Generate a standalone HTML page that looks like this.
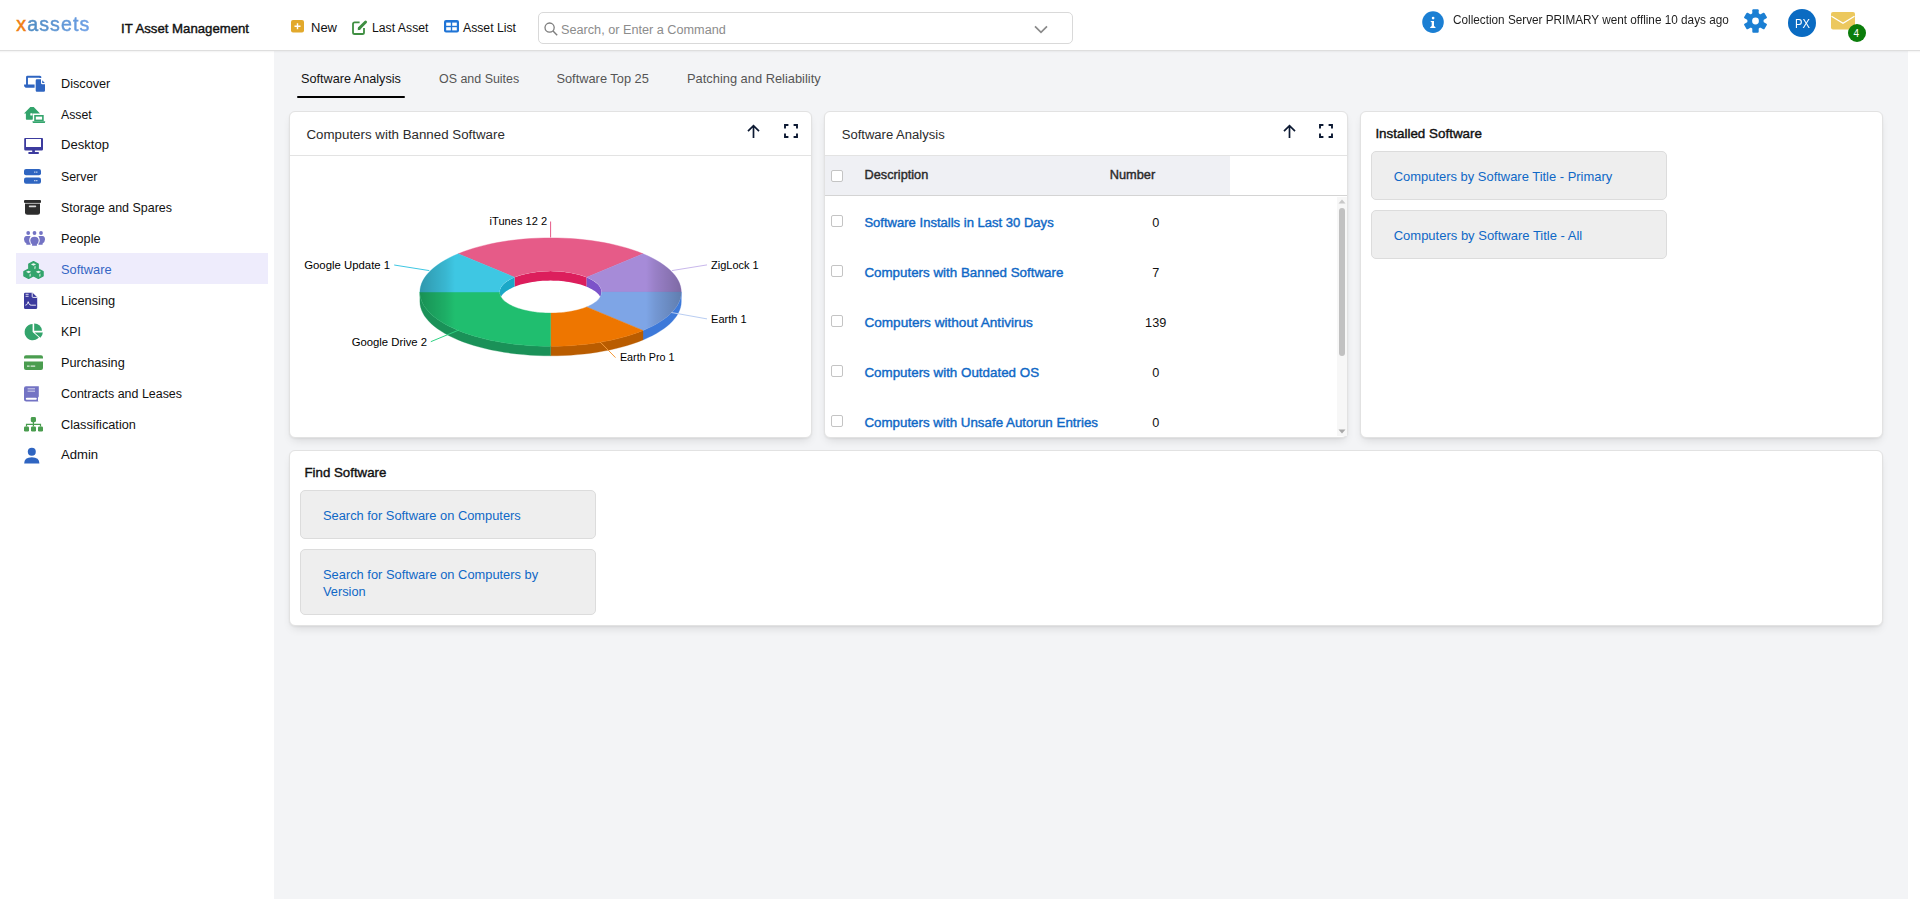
<!DOCTYPE html><html><head><meta charset="utf-8"><style>
*{margin:0;padding:0;box-sizing:border-box}
html,body{width:1920px;height:911px;overflow:hidden;background:#fff;font-family:"Liberation Sans",sans-serif}
.t{position:absolute;white-space:nowrap;line-height:0}
svg{position:absolute;overflow:visible}
</style></head><body><div style="position:absolute;left:274px;top:51px;width:1634px;height:848px;background:#f3f4f6"></div>
<div style="position:absolute;left:0px;top:0px;width:1920px;height:50px;background:#fff"></div>
<div style="position:absolute;left:0px;top:50px;width:1920px;height:1px;background:#dedede"></div>
<div style="position:absolute;left:0px;top:51px;width:1920px;height:2px;background:linear-gradient(rgba(0,0,0,0.05),rgba(0,0,0,0))"></div>
<div class="t" style="left:16.3px;top:24.2px;font-size:19.6px;letter-spacing:1.1px;-webkit-text-stroke-width:0.5px"><span style="color:#f07f14">x</span><span style="background:linear-gradient(90deg,#4f8cc2,#6d9fe6);-webkit-background-clip:text;background-clip:text;color:transparent">assets</span></div>
<div class="t" style="left:121.00px;top:28.83px;font-size:13.2px;font-weight:normal;color:#111;-webkit-text-stroke-width:0.4px;">IT Asset Management</div>
<svg style="left:291px;top:20px" width="14" height="13" viewBox="0 0 14 13"><rect x="0" y="0" width="13" height="12.6" rx="2" fill="#e2a92c"/><path d="M6.5 3.3v6M3.5 6.3h6" stroke="#fff" stroke-width="1.4"/></svg>
<div class="t" style="left:311.00px;top:27.50px;font-size:13.0px;font-weight:normal;color:#111;">New</div>
<svg style="left:352px;top:19px" width="16" height="16" viewBox="0 0 16 16"><path d="M7.6 3.4H2.6Q1 3.4 1 5v8.4Q1 15 2.6 15h7.8q1.6 0 1.6-1.6V9" fill="none" stroke="#3e8e41" stroke-width="1.8"/><path d="M7.2 9.4L13.6 3" stroke="#3e8e41" stroke-width="2.9" stroke-linecap="round"/><path d="M5.6 11.2l.9-2.9 2.1 2.1z" fill="#3e8e41"/></svg>
<div class="t" style="left:372.00px;top:27.76px;font-size:12.24px;font-weight:normal;color:#111;">Last Asset</div>
<svg style="left:444px;top:20px" width="15" height="13" viewBox="0 0 15 13"><rect x="0" y="0" width="15" height="12.6" rx="2" fill="#1f74d6"/><rect x="2.2" y="2.6" width="4.6" height="3.2" fill="#fff"/><rect x="8.2" y="2.6" width="4.6" height="3.2" fill="#fff"/><rect x="2.2" y="7.2" width="4.6" height="3.2" fill="#fff"/><rect x="8.2" y="7.2" width="4.6" height="3.2" fill="#fff"/></svg>
<div class="t" style="left:463.00px;top:27.77px;font-size:12.22px;font-weight:normal;color:#111;">Asset List</div>
<div style="position:absolute;left:538px;top:12px;width:535px;height:32px;border:1px solid #d9d9d9;border-radius:5px;background:#fff"></div>
<svg style="left:543px;top:21px" width="16" height="16" viewBox="0 0 16 16"><circle cx="6.6" cy="6.6" r="4.6" fill="none" stroke="#7d7d7d" stroke-width="1.3"/><path d="M10 10l4.2 4.2" stroke="#7d7d7d" stroke-width="1.4"/></svg>
<div class="t" style="left:561.00px;top:29.61px;font-size:12.68px;font-weight:normal;color:#8c8c8c;">Search, or Enter a Command</div>
<svg style="left:1034px;top:25px" width="14" height="10" viewBox="0 0 14 10"><path d="M1 1.4l6 6 6-6" fill="none" stroke="#8a8a8a" stroke-width="1.7"/></svg>
<svg style="left:1421.5px;top:11px" width="22" height="22" viewBox="0 0 22 22"><circle cx="11" cy="11.1" r="10.8" fill="#1b7fd3"/><circle cx="11.1" cy="7.1" r="1.35" fill="#fff"/><path d="M8.7 9.9h3.3v5l1.5 1.3v.7H8.2v-.7l1.5-1.3v-3.6l-1-.6z" fill="#fff"/></svg>
<div class="t" style="left:1453.00px;top:19.53px;font-size:12.9px;font-weight:normal;color:#1f1f1f;transform:scaleX(0.912);transform-origin:0 0;">Collection Server PRIMARY went offline 10 days ago</div>
<svg style="left:1744px;top:9px" width="24" height="24" viewBox="0 0 24 24"><rect x="8.30" y="0.20" width="6.4" height="6" rx="1" transform="rotate(0 11.5 12)" fill="#1b7fd3"/><rect x="8.30" y="0.20" width="6.4" height="6" rx="1" transform="rotate(60 11.5 12)" fill="#1b7fd3"/><rect x="8.30" y="0.20" width="6.4" height="6" rx="1" transform="rotate(120 11.5 12)" fill="#1b7fd3"/><rect x="8.30" y="0.20" width="6.4" height="6" rx="1" transform="rotate(180 11.5 12)" fill="#1b7fd3"/><rect x="8.30" y="0.20" width="6.4" height="6" rx="1" transform="rotate(240 11.5 12)" fill="#1b7fd3"/><rect x="8.30" y="0.20" width="6.4" height="6" rx="1" transform="rotate(300 11.5 12)" fill="#1b7fd3"/><circle cx="11.5" cy="12" r="8.2" fill="#1b7fd3"/><circle cx="11.5" cy="12" r="3.4" fill="#fff"/></svg>
<div style="position:absolute;left:1788px;top:9px;width:28px;height:28px;border-radius:50%;background:#0a6bc2"></div>
<div class="t" style="left:1794.80px;top:23.63px;font-size:12.6px;font-weight:normal;color:#fff;transform:scaleX(0.89);transform-origin:0 0;">PX</div>
<svg style="left:1831px;top:12px" width="25" height="18" viewBox="0 0 25 18"><rect x="0" y="0" width="24" height="17.6" rx="2" fill="#ecc85e"/><path d="M0.5 4.2l11.5 7 11.5-7" fill="none" stroke="#fff" stroke-width="1.3"/></svg>
<div style="position:absolute;left:1848px;top:24px;width:18px;height:18px;border-radius:50%;background:#0b7d0b"></div>
<div class="t" style="left:1853.60px;top:33.53px;font-size:10px;font-weight:normal;color:#fff;">4</div>
<div style="position:absolute;left:16px;top:253px;width:252px;height:31px;background:#eeecfc"></div>
<div class="t" style="left:61.00px;top:83.60px;font-size:12.7px;font-weight:normal;color:#111;">Discover</div>
<div class="t" style="left:61.00px;top:114.74px;font-size:12.3px;font-weight:normal;color:#111;">Asset</div>
<div class="t" style="left:61.00px;top:145.46px;font-size:13.1px;font-weight:normal;color:#111;">Desktop</div>
<div class="t" style="left:61.00px;top:176.72px;font-size:12.35px;font-weight:normal;color:#111;">Server</div>
<div class="t" style="left:61.00px;top:207.67px;font-size:12.49px;font-weight:normal;color:#111;">Storage and Spares</div>
<div class="t" style="left:61.00px;top:238.60px;font-size:12.71px;font-weight:normal;color:#111;">People</div>
<div class="t" style="left:61.00px;top:269.55px;font-size:12.84px;font-weight:normal;color:#3566c4;">Software</div>
<div class="t" style="left:61.00px;top:300.56px;font-size:12.82px;font-weight:normal;color:#111;">Licensing</div>
<div class="t" style="left:61.00px;top:331.74px;font-size:12.3px;font-weight:normal;color:#111;">KPI</div>
<div class="t" style="left:61.00px;top:362.59px;font-size:12.74px;font-weight:normal;color:#111;">Purchasing</div>
<div class="t" style="left:61.00px;top:393.69px;font-size:12.44px;font-weight:normal;color:#111;">Contracts and Leases</div>
<div class="t" style="left:61.00px;top:424.60px;font-size:12.71px;font-weight:normal;color:#111;">Classification</div>
<div class="t" style="left:61.00px;top:455.46px;font-size:13.1px;font-weight:normal;color:#111;">Admin</div>
<svg style="left:23px;top:75px" width="24" height="18" viewBox="0 0 24 18"><path d="M4 10V2.2q0-.4.4-.4H17.2" fill="none" stroke="#2f65c1" stroke-width="1.9"/><path d="M16.4 1h1q.9 0 .9.9v1h-1.9z" fill="#2f65c1"/><path d="M1.1 9.6H11.6v2.6q0 .6-.6.6H2.6L1.1 11.2z" fill="#2f65c1"/><path d="M13.9 4.2H18V7.9q0 1.3 1.3 1.3H22V15.6q0 1.2-1.2 1.2H13.9q-1.2 0-1.2-1.2V5.4q0-1.2 1.2-1.2z" fill="#2f65c1"/><path d="M19.2 5.2L21.8 8.1H19.2z" fill="#2f65c1"/></svg>
<svg style="left:23px;top:106px" width="24" height="18" viewBox="0 0 24 18"><path d="M1 7.5L7.3 1H10.7L17 7.5H9.9V13q0 .7-.7.7H3.6q-.7 0-.7-.7V7.5z" fill="#33a46c"/><rect x="7.3" y="7.2" width="2.3" height="2.4" rx=".6" fill="#fff"/><rect x="9.9" y="8" width="12" height="9.6" fill="#fff"/><rect x="12" y="9.8" width="7.9" height="4.6" fill="none" stroke="#33a46c" stroke-width="1.6"/><path d="M9.4 15.2H22.3L21.8 16.9H9.9z" fill="#33a46c"/></svg>
<svg style="left:24px;top:137px" width="20" height="18" viewBox="0 0 20 18"><path d="M1.1 1h17q.9 0 .9.9v10.4q0 1.3-1.3 1.3H1.5Q.2 13.6.2 12.3V1.9Q.2 1 1.1 1z" fill="#3c3b9e"/><rect x="2" y="2" width="15" height="8" fill="#fff"/><rect x="8.2" y="13" width="2.7" height="2.4" fill="#3c3b9e"/><rect x="4.2" y="15" width="10.8" height="1.9" rx=".9" fill="#3c3b9e"/></svg>
<svg style="left:24px;top:168px" width="18" height="18" viewBox="0 0 18 18"><rect x="0" y="1" width="17" height="6.2" rx="2" fill="#2f65c1"/><rect x="0" y="9.6" width="17" height="6.2" rx="2" fill="#2f65c1"/><rect x="10.2" y="3.6" width="1.2" height="1" fill="#fff"/><rect x="12.2" y="3.6" width="1.2" height="1" fill="#fff"/><rect x="10.2" y="12.2" width="1.2" height="1" fill="#fff"/><rect x="12.2" y="12.2" width="1.2" height="1" fill="#fff"/></svg>
<svg style="left:24px;top:199px" width="18" height="18" viewBox="0 0 18 18"><rect x="0" y="0.9" width="17" height="3" rx="1" fill="#2d2d2d"/><rect x="1" y="3.9" width="15" height="0.8" fill="#bdbdbd"/><path d="M1 4.7h15v8.6q0 2.5-2.5 2.5h-10Q1 15.8 1 13.3z" fill="#2d2d2d"/><rect x="4.8" y="6.6" width="7.4" height="1.6" rx=".7" fill="#d6d6d6"/></svg>
<svg style="left:23px;top:230px" width="23" height="18" viewBox="0 0 23 18"><g fill="#7373c4"><circle cx="5.2" cy="3" r="1.9"/><circle cx="11.5" cy="3" r="1.9"/><circle cx="18" cy="3" r="1.9"/><path d="M3.5 6H7.6Q6.2 8.4 6.2 10.2Q6.2 12.2 7.6 14V14.8H3.4V13.6Q1 12 1 9.6Q1 6 3.5 6z"/><path d="M19.5 6H15.4Q16.8 8.4 16.8 10.2Q16.8 12.2 15.4 14V14.8H19.6V13.6Q22 12 22 9.6Q22 6 19.5 6z"/><path d="M11.5 6.8Q15.7 6.8 15.7 10.6Q15.7 13 13.9 14.2V15.8H9.1V14.2Q7.3 13 7.3 10.6Q7.3 6.8 11.5 6.8z"/></g></svg>
<svg style="left:23px;top:261px" width="22" height="19" viewBox="0 0 22 19"><g fill="#33a46c" stroke="#33a46c" stroke-width="1.3" stroke-linejoin="round"><path d="M10.50,0.60 L15.20,2.99 L15.20,7.41 L10.50,9.80 L5.80,7.41 L5.80,2.99Z"/><path d="M5.60,8.20 L10.30,10.59 L10.30,15.01 L5.60,17.40 L0.90,15.01 L0.90,10.59Z"/><path d="M15.40,8.20 L20.10,10.59 L20.10,15.01 L15.40,17.40 L10.70,15.01 L10.70,10.59Z"/></g><g fill="#fff" opacity=".9"><path d="M10.50,2.20 L13.10,3.19 L10.50,4.69 L7.90,3.19Z"/><path d="M11.50,5.59 L12.50,4.99 L12.50,7.61 L11.50,8.21Z"/><path d="M5.60,9.80 L8.20,10.79 L5.60,12.29 L3.00,10.79Z"/><path d="M6.60,13.19 L7.60,12.59 L7.60,15.21 L6.60,15.81Z"/><path d="M15.40,9.80 L18.00,10.79 L15.40,12.29 L12.80,10.79Z"/><path d="M16.40,13.19 L17.40,12.59 L17.40,15.21 L16.40,15.81Z"/></g></svg>
<svg style="left:23px;top:292px" width="16" height="18" viewBox="0 0 16 18"><path d="M2.2 0.7h7.4l4.6 4.6v10.4q0 1.4-1.4 1.4H2.4Q1 17.1 1 15.7V1.9Q1 .7 2.2 .7z" fill="#3c3b9e"/><path d="M9.2 0.7v3.8q0 .9.9 .9h4.1" fill="none" stroke="#fff" stroke-width="0.9"/><rect x="2.6" y="1.8" width="3" height="1" fill="#fff" opacity=".8"/><rect x="2.6" y="3.8" width="3" height="1" fill="#fff" opacity=".8"/><path d="M2.4 13.2q1.4 0 2.1-1.8l.7-1.7.9 2.2q.6 1.3 2.2 1.3h4.6" fill="none" stroke="#fff" stroke-width=".9"/></svg>
<svg style="left:24px;top:323px" width="20" height="18" viewBox="0 0 20 18"><path d="M8.6 0.9A8.2 8.2 0 1 0 14.9 14.6L8.6 8.9z" fill="#33a46c"/><path d="M10.2 0.5A7.6 7.6 0 0 1 18 7.8H10.2z" fill="#33a46c"/><path d="M10.6 9.4H18.8a8 8 0 0 1-2.4 5.4z" fill="#33a46c"/></svg>
<svg style="left:24px;top:354px" width="20" height="18" viewBox="0 0 20 18"><path d="M2 1.2h15q2 0 2 2v1.2H0V3.2q0-2 2-2z" fill="#4a9d4f"/><path d="M0 7.4h19v6.6q0 2-2 2H2q-2 0-2-2z" fill="#4a9d4f"/><rect x="3" y="11.6" width="2.6" height="1" fill="#fff"/><rect x="6.6" y="11.6" width="4.6" height="1" fill="#fff"/></svg>
<svg style="left:24px;top:385px" width="16" height="18" viewBox="0 0 16 18"><path d="M2 1.2h12.8v10.4q-.8.6-.8 1.6v2.6q0 .4.8.8H2.2Q0 16.6 0 14.6V3.2Q0 1.2 2 1.2z" fill="#7373c4"/><rect x="3.6" y="3.2" width="7.4" height="1.2" fill="#fff" opacity=".6"/><rect x="3.6" y="5.6" width="7.4" height="1.2" fill="#fff" opacity=".6"/><rect x="1.8" y="12.8" width="11" height="2" rx="1" fill="#fff"/></svg>
<svg style="left:24px;top:416px" width="20" height="18" viewBox="0 0 20 18"><rect x="6.8" y="1" width="5.2" height="5.2" rx="1.4" fill="#4a9d4f"/><rect x="0" y="10.4" width="5" height="5" rx="1.2" fill="#4a9d4f"/><rect x="7" y="10.4" width="5" height="5" rx="1.2" fill="#4a9d4f"/><rect x="14" y="10.4" width="5" height="5" rx="1.2" fill="#4a9d4f"/><path d="M9.4 6v4.6M2.5 10.6V8.4h14v2.2" fill="none" stroke="#4a9d4f" stroke-width="1.2"/></svg>
<svg style="left:24px;top:447px" width="16" height="18" viewBox="0 0 16 18"><circle cx="7.8" cy="4.8" r="4" fill="#2f65c1"/><path d="M0.2 16.6q0-6.4 7.6-6.4t7.6 6.4z" fill="#2f65c1"/></svg>
<div class="t" style="left:301.00px;top:78.61px;font-size:12.66px;font-weight:normal;color:#111;">Software Analysis</div>
<div class="t" style="left:439.00px;top:78.69px;font-size:12.45px;font-weight:normal;color:#555;">OS and Suites</div>
<div class="t" style="left:556.40px;top:78.55px;font-size:12.84px;font-weight:normal;color:#555;">Software Top 25</div>
<div class="t" style="left:687.00px;top:78.54px;font-size:12.86px;font-weight:normal;color:#555;">Patching and Reliability</div>
<div style="position:absolute;left:297px;top:96px;width:108px;height:2px;background:#000;border-radius:1px"></div>
<div style="position:absolute;left:289px;top:111px;width:523px;height:327px;background:#fff;border:1px solid #e2e2e2;border-radius:6px;box-shadow:0 5px 10px -3px rgba(0,0,0,0.12),0 1px 2px rgba(0,0,0,0.05)"></div>
<div style="position:absolute;left:824px;top:111px;width:524px;height:327px;background:#fff;border:1px solid #e2e2e2;border-radius:6px;box-shadow:0 5px 10px -3px rgba(0,0,0,0.12),0 1px 2px rgba(0,0,0,0.05)"></div>
<div style="position:absolute;left:1360px;top:111px;width:523px;height:327px;background:#fff;border:1px solid #e2e2e2;border-radius:6px;box-shadow:0 5px 10px -3px rgba(0,0,0,0.12),0 1px 2px rgba(0,0,0,0.05)"></div>
<div style="position:absolute;left:289px;top:450px;width:1594px;height:176px;background:#fff;border:1px solid #e2e2e2;border-radius:6px;box-shadow:0 5px 10px -3px rgba(0,0,0,0.12),0 1px 2px rgba(0,0,0,0.05)"></div>
<div class="t" style="left:306.50px;top:134.98px;font-size:13.32px;font-weight:normal;color:#2b2b2b;">Computers with Banned Software</div>
<div style="position:absolute;left:290px;top:155px;width:521px;height:1px;background:#e3e3e3"></div>
<svg style="left:747px;top:124px" width="14" height="15" viewBox="0 0 14 15"><path d="M6.5 14V1.8M1 7.2l5.5-5.6L12 7.2" fill="none" stroke="#0d1a33" stroke-width="1.7"/></svg>
<svg style="left:783.5px;top:124px" width="15" height="15" viewBox="0 0 15 15"><path d="M1 4.4V1h3.4M9.6 1h3.4v3.4M13 9.6V13H9.6M4.4 13H1V9.6" fill="none" stroke="#0d1a33" stroke-width="1.9"/></svg>
<svg style="left:1283px;top:124px" width="14" height="15" viewBox="0 0 14 15"><path d="M6.5 14V1.8M1 7.2l5.5-5.6L12 7.2" fill="none" stroke="#0d1a33" stroke-width="1.7"/></svg>
<svg style="left:1318.5px;top:124px" width="15" height="15" viewBox="0 0 15 15"><path d="M1 4.4V1h3.4M9.6 1h3.4v3.4M13 9.6V13H9.6M4.4 13H1V9.6" fill="none" stroke="#0d1a33" stroke-width="1.9"/></svg>
<div class="t" style="left:841.70px;top:135.07px;font-size:13.06px;font-weight:normal;color:#2b2b2b;">Software Analysis</div>
<div style="position:absolute;left:825px;top:155px;width:522px;height:1px;background:#e3e3e3"></div>
<div style="position:absolute;left:825px;top:156px;width:405px;height:39px;background:#eff0f4"></div>
<div style="position:absolute;left:825px;top:195px;width:522px;height:1px;background:#d4d4d4"></div>
<div style="position:absolute;left:831px;top:170px;width:12px;height:12px;border:1px solid #c4c4c4;border-radius:2px;background:#fff"></div>
<div class="t" style="left:864.60px;top:174.59px;font-size:12.72px;font-weight:normal;color:#2a2a2a;-webkit-text-stroke-width:0.4px;">Description</div>
<div class="t" style="left:1109.70px;top:174.57px;font-size:12.79px;font-weight:normal;color:#2a2a2a;-webkit-text-stroke-width:0.4px;">Number</div>
<div style="position:absolute;left:831px;top:215px;width:12px;height:12px;border:1px solid #c4c4c4;border-radius:2px;background:#fff"></div>
<div class="t" style="left:864.40px;top:223.38px;font-size:13.05px;font-weight:normal;color:#0f68c6;-webkit-text-stroke-width:0.4px;">Software Installs in Last 30 Days</div>
<div class="t" style="left:1125.7px;width:60px;text-align:center;top:222.70px;font-size:12.7px;color:#111">0</div>
<div style="position:absolute;left:831px;top:265px;width:12px;height:12px;border:1px solid #c4c4c4;border-radius:2px;background:#fff"></div>
<div class="t" style="left:864.40px;top:273.27px;font-size:13.37px;font-weight:normal;color:#0f68c6;-webkit-text-stroke-width:0.4px;">Computers with Banned Software</div>
<div class="t" style="left:1125.7px;width:60px;text-align:center;top:272.70px;font-size:12.7px;color:#111">7</div>
<div style="position:absolute;left:831px;top:315px;width:12px;height:12px;border:1px solid #c4c4c4;border-radius:2px;background:#fff"></div>
<div class="t" style="left:864.40px;top:323.19px;font-size:13.6px;font-weight:normal;color:#0f68c6;-webkit-text-stroke-width:0.4px;">Computers without Antivirus</div>
<div class="t" style="left:1125.7px;width:60px;text-align:center;top:322.70px;font-size:12.7px;color:#111">139</div>
<div style="position:absolute;left:831px;top:365px;width:12px;height:12px;border:1px solid #c4c4c4;border-radius:2px;background:#fff"></div>
<div class="t" style="left:864.40px;top:373.26px;font-size:13.38px;font-weight:normal;color:#0f68c6;-webkit-text-stroke-width:0.4px;">Computers with Outdated OS</div>
<div class="t" style="left:1125.7px;width:60px;text-align:center;top:372.70px;font-size:12.7px;color:#111">0</div>
<div style="position:absolute;left:831px;top:415px;width:12px;height:12px;border:1px solid #c4c4c4;border-radius:2px;background:#fff"></div>
<div class="t" style="left:864.40px;top:423.27px;font-size:13.35px;font-weight:normal;color:#0f68c6;-webkit-text-stroke-width:0.4px;">Computers with Unsafe Autorun Entries</div>
<div class="t" style="left:1125.7px;width:60px;text-align:center;top:422.70px;font-size:12.7px;color:#111">0</div>
<div style="position:absolute;left:1337px;top:197px;width:10px;height:239px;background:#f7f7f7"></div>
<div style="position:absolute;left:1339px;top:208px;width:6px;height:148px;background:#c1c1c1;border-radius:3px"></div>
<svg style="left:1338px;top:199px" width="8" height="5" viewBox="0 0 8 5"><path d="M4 0.5L7.5 4.5h-7z" fill="#c8c8c8"/></svg>
<svg style="left:1338px;top:429px" width="8" height="5" viewBox="0 0 8 5"><path d="M4 4.5L7.5 0.5h-7z" fill="#a8a8a8"/></svg>
<div class="t" style="left:1375.40px;top:134.35px;font-size:13.42px;font-weight:normal;color:#111;-webkit-text-stroke-width:0.4px;">Installed Software</div>
<div style="position:absolute;left:1371px;top:151px;width:296px;height:49px;background:#eeeeee;border:1px solid #dcdcdc;border-radius:5px"></div>
<div style="position:absolute;left:1371px;top:210px;width:296px;height:49px;background:#eeeeee;border:1px solid #dcdcdc;border-radius:5px"></div>
<div class="t" style="left:1393.70px;top:176.52px;font-size:12.94px;font-weight:normal;color:#0f68c6;">Computers by Software Title - Primary</div>
<div class="t" style="left:1393.70px;top:236.00px;font-size:13.0px;font-weight:normal;color:#0f68c6;">Computers by Software Title - All</div>
<div class="t" style="left:304.50px;top:473.40px;font-size:13.28px;font-weight:normal;color:#111;-webkit-text-stroke-width:0.4px;">Find Software</div>
<div style="position:absolute;left:300px;top:490px;width:296px;height:49px;background:#eeeeee;border:1px solid #dcdcdc;border-radius:5px"></div>
<div style="position:absolute;left:300px;top:549px;width:296px;height:66px;background:#eeeeee;border:1px solid #dcdcdc;border-radius:5px"></div>
<div class="t" style="left:323.00px;top:516.05px;font-size:12.85px;font-weight:normal;color:#0f68c6;">Search for Software on Computers</div>
<div class="t" style="left:323.00px;top:575.34px;font-size:12.86px;font-weight:normal;color:#0f68c6;">Search for Software on Computers by</div>
<div class="t" style="left:323.00px;top:591.96px;font-size:12.81px;font-weight:normal;color:#0f68c6;">Version</div>
<svg style="left:0;top:0" width="1920" height="911"><defs><clipPath id="hole"><ellipse cx="550.6" cy="292.1" rx="51.0" ry="21.0"/></clipPath><linearGradient id="edge" gradientUnits="userSpaceOnUse" x1="419.90000000000003" y1="0" x2="681.3" y2="0"><stop offset="0" stop-color="#000" stop-opacity="0.24"/><stop offset="0.10" stop-color="#000" stop-opacity="0.08"/><stop offset="0.135" stop-color="#000" stop-opacity="0"/><stop offset="0.865" stop-color="#000" stop-opacity="0"/><stop offset="0.90" stop-color="#000" stop-opacity="0.08"/><stop offset="1" stop-color="#000" stop-opacity="0.24"/></linearGradient></defs><g clip-path="url(#hole)"><path d="M514.54,277.25 L516.47,276.49 L518.50,275.78 L520.62,275.11 L522.82,274.49 L525.10,273.91 L527.45,273.39 L529.86,272.92 L532.32,272.49 L534.84,272.13 L537.40,271.82 L540.00,271.56 L542.62,271.36 L545.27,271.22 L547.93,271.13 L550.60,271.10 L553.27,271.13 L555.93,271.22 L558.58,271.36 L561.20,271.56 L563.80,271.82 L566.36,272.13 L568.88,272.49 L571.34,272.92 L573.75,273.39 L576.10,273.91 L578.38,274.49 L580.58,275.11 L582.70,275.78 L584.73,276.49 L586.66,277.25 L586.66,286.75 L584.73,285.99 L582.70,285.28 L580.58,284.61 L578.38,283.99 L576.10,283.41 L573.75,282.89 L571.34,282.42 L568.88,281.99 L566.36,281.63 L563.80,281.32 L561.20,281.06 L558.58,280.86 L555.93,280.72 L553.27,280.63 L550.60,280.60 L547.93,280.63 L545.27,280.72 L542.62,280.86 L540.00,281.06 L537.40,281.32 L534.84,281.63 L532.32,281.99 L529.86,282.42 L527.45,282.89 L525.10,283.41 L522.82,283.99 L520.62,284.61 L518.50,285.28 L516.47,285.99 L514.54,286.75Z" fill="#dc1e5c"/><path d="M586.66,277.25 L588.50,278.05 L590.23,278.88 L591.86,279.76 L593.37,280.66 L594.77,281.60 L596.04,282.57 L597.19,283.56 L598.21,284.57 L599.10,285.61 L599.86,286.66 L600.49,287.73 L600.97,288.81 L601.32,289.90 L601.53,291.00 L601.60,292.10 L601.60,301.60 L601.53,300.50 L601.32,299.40 L600.97,298.31 L600.49,297.23 L599.86,296.16 L599.10,295.11 L598.21,294.07 L597.19,293.06 L596.04,292.07 L594.77,291.10 L593.37,290.16 L591.86,289.26 L590.23,288.38 L588.50,287.55 L586.66,286.75Z" fill="#7c53c9"/><path d="M499.60,292.10 L499.67,291.00 L499.88,289.90 L500.23,288.81 L500.71,287.73 L501.34,286.66 L502.10,285.61 L502.99,284.57 L504.01,283.56 L505.16,282.57 L506.43,281.60 L507.83,280.66 L509.34,279.76 L510.97,278.88 L512.70,278.05 L514.54,277.25 L514.54,286.75 L512.70,287.55 L510.97,288.38 L509.34,289.26 L507.83,290.16 L506.43,291.10 L505.16,292.07 L504.01,293.06 L502.99,294.07 L502.10,295.11 L501.34,296.16 L500.71,297.23 L500.23,298.31 L499.88,299.40 L499.67,300.50 L499.60,301.60Z" fill="#1ba8c7"/></g><path d="M681.30,292.10 L681.12,294.94 L680.58,297.77 L679.69,300.58 L678.44,303.37 L676.85,306.13 L674.90,308.85 L672.62,311.52 L670.00,314.15 L667.05,316.71 L663.79,319.20 L660.21,321.62 L656.34,323.96 L652.17,326.21 L647.73,328.37 L643.02,330.43 L643.02,339.93 L647.73,337.87 L652.17,335.71 L656.34,333.46 L660.21,331.12 L663.79,328.70 L667.05,326.21 L670.00,323.65 L672.62,321.02 L674.90,318.35 L676.85,315.63 L678.44,312.87 L679.69,310.08 L680.58,307.27 L681.12,304.44 L681.30,301.60Z" fill="#3d79d9" stroke="#3d79d9" stroke-width="0.3"/><path d="M643.02,330.43 L638.06,332.38 L632.85,334.22 L627.42,335.95 L621.78,337.56 L615.95,339.04 L609.94,340.39 L603.76,341.61 L597.44,342.70 L590.99,343.65 L584.43,344.45 L577.77,345.12 L571.05,345.63 L564.26,346.00 L557.44,346.23 L550.60,346.30 L550.60,355.80 L557.44,355.73 L564.26,355.50 L571.05,355.13 L577.77,354.62 L584.43,353.95 L590.99,353.15 L597.44,352.20 L603.76,351.11 L609.94,349.89 L615.95,348.54 L621.78,347.06 L627.42,345.45 L632.85,343.72 L638.06,341.88 L643.02,339.93Z" fill="#b95c00" stroke="#b95c00" stroke-width="0.3"/><path d="M550.60,346.30 L543.76,346.23 L536.94,346.00 L530.15,345.63 L523.43,345.12 L516.77,344.45 L510.21,343.65 L503.76,342.70 L497.44,341.61 L491.26,340.39 L485.25,339.04 L479.42,337.56 L473.78,335.95 L468.35,334.22 L463.14,332.38 L458.18,330.43 L453.47,328.37 L449.03,326.21 L444.86,323.96 L440.99,321.62 L437.41,319.20 L434.15,316.71 L431.20,314.15 L428.58,311.52 L426.30,308.85 L424.35,306.13 L422.76,303.37 L421.51,300.58 L420.62,297.77 L420.08,294.94 L419.90,292.10 L419.90,301.60 L420.08,304.44 L420.62,307.27 L421.51,310.08 L422.76,312.87 L424.35,315.63 L426.30,318.35 L428.58,321.02 L431.20,323.65 L434.15,326.21 L437.41,328.70 L440.99,331.12 L444.86,333.46 L449.03,335.71 L453.47,337.87 L458.18,339.93 L463.14,341.88 L468.35,343.72 L473.78,345.45 L479.42,347.06 L485.25,348.54 L491.26,349.89 L497.44,351.11 L503.76,352.20 L510.21,353.15 L516.77,353.95 L523.43,354.62 L530.15,355.13 L536.94,355.50 L543.76,355.73 L550.60,355.80Z" fill="#1a9158" stroke="#1a9158" stroke-width="0.3"/><path d="M458.18,253.77 L463.14,251.82 L468.35,249.98 L473.78,248.25 L479.42,246.64 L485.25,245.16 L491.26,243.81 L497.44,242.59 L503.76,241.50 L510.21,240.55 L516.77,239.75 L523.43,239.08 L530.15,238.57 L536.94,238.20 L543.76,237.97 L550.60,237.90 L557.44,237.97 L564.26,238.20 L571.05,238.57 L577.77,239.08 L584.43,239.75 L590.99,240.55 L597.44,241.50 L603.76,242.59 L609.94,243.81 L615.95,245.16 L621.78,246.64 L627.42,248.25 L632.85,249.98 L638.06,251.82 L643.02,253.77 L586.66,277.25 L584.73,276.49 L582.70,275.78 L580.58,275.11 L578.38,274.49 L576.10,273.91 L573.75,273.39 L571.34,272.92 L568.88,272.49 L566.36,272.13 L563.80,271.82 L561.20,271.56 L558.58,271.36 L555.93,271.22 L553.27,271.13 L550.60,271.10 L547.93,271.13 L545.27,271.22 L542.62,271.36 L540.00,271.56 L537.40,271.82 L534.84,272.13 L532.32,272.49 L529.86,272.92 L527.45,273.39 L525.10,273.91 L522.82,274.49 L520.62,275.11 L518.50,275.78 L516.47,276.49 L514.54,277.25Z" fill="#e65b88" stroke="#e65b88" stroke-width="0.4"/><path d="M643.02,253.77 L647.73,255.83 L652.17,257.99 L656.34,260.24 L660.21,262.58 L663.79,265.00 L667.05,267.49 L670.00,270.05 L672.62,272.68 L674.90,275.35 L676.85,278.07 L678.44,280.83 L679.69,283.62 L680.58,286.43 L681.12,289.26 L681.30,292.10 L601.60,292.10 L601.53,291.00 L601.32,289.90 L600.97,288.81 L600.49,287.73 L599.86,286.66 L599.10,285.61 L598.21,284.57 L597.19,283.56 L596.04,282.57 L594.77,281.60 L593.37,280.66 L591.86,279.76 L590.23,278.88 L588.50,278.05 L586.66,277.25Z" fill="#a68bd8" stroke="#a68bd8" stroke-width="0.4"/><path d="M681.30,292.10 L681.12,294.94 L680.58,297.77 L679.69,300.58 L678.44,303.37 L676.85,306.13 L674.90,308.85 L672.62,311.52 L670.00,314.15 L667.05,316.71 L663.79,319.20 L660.21,321.62 L656.34,323.96 L652.17,326.21 L647.73,328.37 L643.02,330.43 L586.66,306.95 L588.50,306.15 L590.23,305.32 L591.86,304.44 L593.37,303.54 L594.77,302.60 L596.04,301.63 L597.19,300.64 L598.21,299.63 L599.10,298.59 L599.86,297.54 L600.49,296.47 L600.97,295.39 L601.32,294.30 L601.53,293.20 L601.60,292.10Z" fill="#7ea5e6" stroke="#7ea5e6" stroke-width="0.4"/><path d="M643.02,330.43 L638.06,332.38 L632.85,334.22 L627.42,335.95 L621.78,337.56 L615.95,339.04 L609.94,340.39 L603.76,341.61 L597.44,342.70 L590.99,343.65 L584.43,344.45 L577.77,345.12 L571.05,345.63 L564.26,346.00 L557.44,346.23 L550.60,346.30 L550.60,313.10 L553.27,313.07 L555.93,312.98 L558.58,312.84 L561.20,312.64 L563.80,312.38 L566.36,312.07 L568.88,311.71 L571.34,311.28 L573.75,310.81 L576.10,310.29 L578.38,309.71 L580.58,309.09 L582.70,308.42 L584.73,307.71 L586.66,306.95Z" fill="#ee7600" stroke="#ee7600" stroke-width="0.4"/><path d="M550.60,346.30 L543.76,346.23 L536.94,346.00 L530.15,345.63 L523.43,345.12 L516.77,344.45 L510.21,343.65 L503.76,342.70 L497.44,341.61 L491.26,340.39 L485.25,339.04 L479.42,337.56 L473.78,335.95 L468.35,334.22 L463.14,332.38 L458.18,330.43 L453.47,328.37 L449.03,326.21 L444.86,323.96 L440.99,321.62 L437.41,319.20 L434.15,316.71 L431.20,314.15 L428.58,311.52 L426.30,308.85 L424.35,306.13 L422.76,303.37 L421.51,300.58 L420.62,297.77 L420.08,294.94 L419.90,292.10 L499.60,292.10 L499.67,293.20 L499.88,294.30 L500.23,295.39 L500.71,296.47 L501.34,297.54 L502.10,298.59 L502.99,299.63 L504.01,300.64 L505.16,301.63 L506.43,302.60 L507.83,303.54 L509.34,304.44 L510.97,305.32 L512.70,306.15 L514.54,306.95 L516.47,307.71 L518.50,308.42 L520.62,309.09 L522.82,309.71 L525.10,310.29 L527.45,310.81 L529.86,311.28 L532.32,311.71 L534.84,312.07 L537.40,312.38 L540.00,312.64 L542.62,312.84 L545.27,312.98 L547.93,313.07 L550.60,313.10Z" fill="#20be6f" stroke="#20be6f" stroke-width="0.4"/><path d="M419.90,292.10 L420.08,289.26 L420.62,286.43 L421.51,283.62 L422.76,280.83 L424.35,278.07 L426.30,275.35 L428.58,272.68 L431.20,270.05 L434.15,267.49 L437.41,265.00 L440.99,262.58 L444.86,260.24 L449.03,257.99 L453.47,255.83 L458.18,253.77 L514.54,277.25 L512.70,278.05 L510.97,278.88 L509.34,279.76 L507.83,280.66 L506.43,281.60 L505.16,282.57 L504.01,283.56 L502.99,284.57 L502.10,285.61 L501.34,286.66 L500.71,287.73 L500.23,288.81 L499.88,289.90 L499.67,291.00 L499.60,292.10Z" fill="#3ec7e3" stroke="#3ec7e3" stroke-width="0.4"/><path d="M550.60,237.90 L557.44,237.97 L564.26,238.20 L571.05,238.57 L577.77,239.08 L584.43,239.75 L590.99,240.55 L597.44,241.50 L603.76,242.59 L609.94,243.81 L615.95,245.16 L621.78,246.64 L627.42,248.25 L632.85,249.98 L638.06,251.82 L643.02,253.77 L647.73,255.83 L652.17,257.99 L656.34,260.24 L660.21,262.58 L663.79,265.00 L667.05,267.49 L670.00,270.05 L672.62,272.68 L674.90,275.35 L676.85,278.07 L678.44,280.83 L679.69,283.62 L680.58,286.43 L681.12,289.26 L681.30,292.10 L681.12,294.94 L680.58,297.77 L679.69,300.58 L678.44,303.37 L676.85,306.13 L674.90,308.85 L672.62,311.52 L670.00,314.15 L667.05,316.71 L663.79,319.20 L660.21,321.62 L656.34,323.96 L652.17,326.21 L647.73,328.37 L643.02,330.43 L638.06,332.38 L632.85,334.22 L627.42,335.95 L621.78,337.56 L615.95,339.04 L609.94,340.39 L603.76,341.61 L597.44,342.70 L590.99,343.65 L584.43,344.45 L577.77,345.12 L571.05,345.63 L564.26,346.00 L557.44,346.23 L550.60,346.30 L543.76,346.23 L536.94,346.00 L530.15,345.63 L523.43,345.12 L516.77,344.45 L510.21,343.65 L503.76,342.70 L497.44,341.61 L491.26,340.39 L485.25,339.04 L479.42,337.56 L473.78,335.95 L468.35,334.22 L463.14,332.38 L458.18,330.43 L453.47,328.37 L449.03,326.21 L444.86,323.96 L440.99,321.62 L437.41,319.20 L434.15,316.71 L431.20,314.15 L428.58,311.52 L426.30,308.85 L424.35,306.13 L422.76,303.37 L421.51,300.58 L420.62,297.77 L420.08,294.94 L419.90,292.10 L420.08,289.26 L420.62,286.43 L421.51,283.62 L422.76,280.83 L424.35,278.07 L426.30,275.35 L428.58,272.68 L431.20,270.05 L434.15,267.49 L437.41,265.00 L440.99,262.58 L444.86,260.24 L449.03,257.99 L453.47,255.83 L458.18,253.77 L463.14,251.82 L468.35,249.98 L473.78,248.25 L479.42,246.64 L485.25,245.16 L491.26,243.81 L497.44,242.59 L503.76,241.50 L510.21,240.55 L516.77,239.75 L523.43,239.08 L530.15,238.57 L536.94,238.20 L543.76,237.97 L550.60,237.90Z M550.60,271.10 L545.27,271.22 L540.00,271.56 L534.84,272.13 L529.86,272.92 L525.10,273.91 L520.62,275.11 L516.47,276.49 L512.70,278.05 L509.34,279.76 L506.43,281.60 L504.01,283.56 L502.10,285.61 L500.71,287.73 L499.88,289.90 L499.60,292.10 L499.88,294.30 L500.71,296.47 L502.10,298.59 L504.01,300.64 L506.43,302.60 L509.34,304.44 L512.70,306.15 L516.47,307.71 L520.62,309.09 L525.10,310.29 L529.86,311.28 L534.84,312.07 L540.00,312.64 L545.27,312.98 L550.60,313.10 L555.93,312.98 L561.20,312.64 L566.36,312.07 L571.34,311.28 L576.10,310.29 L580.58,309.09 L584.73,307.71 L588.50,306.15 L591.86,304.44 L594.77,302.60 L597.19,300.64 L599.10,298.59 L600.49,296.47 L601.32,294.30 L601.60,292.10 L601.32,289.90 L600.49,287.73 L599.10,285.61 L597.19,283.56 L594.77,281.60 L591.86,279.76 L588.50,278.05 L584.73,276.49 L580.58,275.11 L576.10,273.91 L571.34,272.92 L566.36,272.13 L561.20,271.56 L555.93,271.22 L550.60,271.10Z" fill="url(#edge)" fill-rule="evenodd"/><polyline points="550.6,221.5 550.6,237.5" fill="none" stroke="#e65b88" stroke-width="1"/><polyline points="394.2,265 429.3,270.6" fill="none" stroke="#3ec7e3" stroke-width="1"/><polyline points="707,264.9 671.9,270.6" fill="none" stroke="#c9b8ec" stroke-width="1"/><polyline points="707,318.9 671.4,312.5" fill="none" stroke="#b9cdf2" stroke-width="1"/><polyline points="430.8,341.7 458.9,330" fill="none" stroke="#2fd283" stroke-width="1"/><polyline points="615.5,357.6 600.2,342" fill="none" stroke="#f59a3a" stroke-width="1"/></svg>
<div class="t" style="left:489.60px;top:220.96px;font-size:11.08px;font-weight:normal;color:#000;">iTunes 12 2</div>
<div class="t" style="left:304.20px;top:264.76px;font-size:11.36px;font-weight:normal;color:#000;">Google Update 1</div>
<div class="t" style="left:711.10px;top:264.79px;font-size:10.99px;font-weight:normal;color:#000;">ZigLock 1</div>
<div class="t" style="left:711.10px;top:319.07px;font-size:11.04px;font-weight:normal;color:#000;">Earth 1</div>
<div class="t" style="left:351.70px;top:341.98px;font-size:11.3px;font-weight:normal;color:#000;">Google Drive 2</div>
<div class="t" style="left:619.90px;top:357.15px;font-size:10.81px;font-weight:normal;color:#000;">Earth Pro 1</div></body></html>
